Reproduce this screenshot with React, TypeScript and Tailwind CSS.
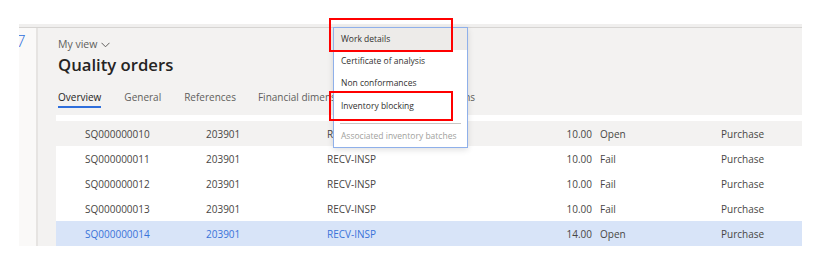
import React from "react";

const rows = [
  { id: "SQ000000010", item: "203901", test: "RECV-INSP", qty: "10.00", status: "Open", ref: "Purchase", kind: "hover" },
  { id: "SQ000000011", item: "203901", test: "RECV-INSP", qty: "10.00", status: "Fail", ref: "Purchase", kind: "" },
  { id: "SQ000000012", item: "203901", test: "RECV-INSP", qty: "10.00", status: "Fail", ref: "Purchase", kind: "" },
  { id: "SQ000000013", item: "203901", test: "RECV-INSP", qty: "10.00", status: "Fail", ref: "Purchase", kind: "" },
  { id: "SQ000000014", item: "203901", test: "RECV-INSP", qty: "14.00", status: "Open", ref: "Purchase", kind: "selected" },
];

export default function App() {
  return (
    <div className="relative w-[822px] h-[260px] bg-white overflow-hidden font-['Open_Sans',sans-serif]">
      <div className="pt-6 pl-[19px] pr-5">
        <div className="border-t-[3px] border-[#f0efee]">
          <div className="flex h-[219px] border-t border-[#d6d4d2]">
            {/* left strip */}
            <div className="w-[17px] bg-[#faf9f8] overflow-hidden">
              <div className="text-[17px] leading-none text-[#2f6fdc] font-light -ml-[3px] mt-[4px]">7</div>
            </div>
            <div className="w-[2px] bg-[#e6e4e2]" />
            {/* main */}
            <div className="flex-1 flex flex-col bg-[#f3f2f1]">
              <div className="pl-[20px] h-[87px] flex flex-col">
                <div className="mt-[8px] flex items-center gap-[4px] text-[10.5px] leading-[16px] text-[#605e5c]">
                  My view
                  <svg width="9" height="6" viewBox="0 0 9 6" className="mt-[1px]">
                    <path d="M0.5 0.8 L4.5 4.8 L8.5 0.8" fill="none" stroke="#605e5c" strokeWidth="1" />
                  </svg>
                </div>
                <div className="mt-[2px] text-[16.7px] leading-[22px] font-semibold text-[#252423]">Quality orders</div>
                <div className="mt-[14px] flex text-[10px] leading-[14px] text-[#605e5c]">
                  <div className="flex flex-col mr-[23px]">
                    <span className="text-[#252423]">Overview</span>
                    <div className="mt-[2px] h-[2px] bg-[#2f6fdc]" />
                  </div>
                  <span className="mr-[23px]">General</span>
                  <span className="mr-[22px]">References</span>
                  <span className="mr-[19px]">Financial dimensions</span>
                  <span>Inventory dimensions</span>
                </div>
              </div>
              <div className="ml-[18px] flex-1 bg-white flex flex-col">
                <div className="h-[6px]" />
                {rows.map((r) => (
                  <div
                    key={r.id}
                    className={
                      "flex h-[25px] items-center pl-[29px] pt-px text-[10px] text-[#484644] " +
                      (r.kind === "selected" ? "bg-[#d8e4f8]" : r.kind === "hover" ? "bg-[#f3f2f1]" : "")
                    }
                  >
                    <span className={"w-[121px] " + (r.kind === "selected" ? "text-[#3a73d8]" : "")}>{r.id}</span>
                    <span className={"w-[121px] " + (r.kind === "selected" ? "text-[#3a73d8]" : "")}>{r.item}</span>
                    <span className={"w-[200px] " + (r.kind === "selected" ? "text-[#3a73d8]" : "")}>{r.test}</span>
                    <span className="w-[65px] text-right">{r.qty}</span>
                    <span className="w-[129px] pl-[8px]">{r.status}</span>
                    <span>{r.ref}</span>
                  </div>
                ))}
              </div>
            </div>
          </div>
        </div>
      </div>

      {/* dropdown menu */}
      <div className="absolute left-[333px] top-[27px] w-[135px] bg-white border border-[#8fb0ea] shadow-[0_2px_6px_rgba(0,0,0,0.12)] text-[8.5px] text-[#323130]">
        <div className="h-[22px] flex items-center pl-[7px] bg-[#edebe9]">Work details</div>
        <div className="h-[22px] flex items-center pl-[7px]">Certificate of analysis</div>
        <div className="h-[23px] flex items-center pl-[7px]">Non conformances</div>
        <div className="h-[22px] flex items-center pl-[7px]">Inventory blocking</div>
        <div className="mt-[6px] mx-[6px] h-px bg-[#c8c6c4]" />
        <div className="h-[23px] pt-[2px] flex items-center pl-[7px] text-[#a19f9d] whitespace-nowrap">Associated inventory batches</div>
      </div>

      {/* red highlight boxes */}
      <div className="absolute left-[329px] top-[18px] w-[124px] h-[34px] border-[2.5px] border-[#ff0000]" />
      <div className="absolute left-[329px] top-[91px] w-[124px] h-[30px] border-[2.5px] border-[#ff0000]" />
    </div>
  );
}
